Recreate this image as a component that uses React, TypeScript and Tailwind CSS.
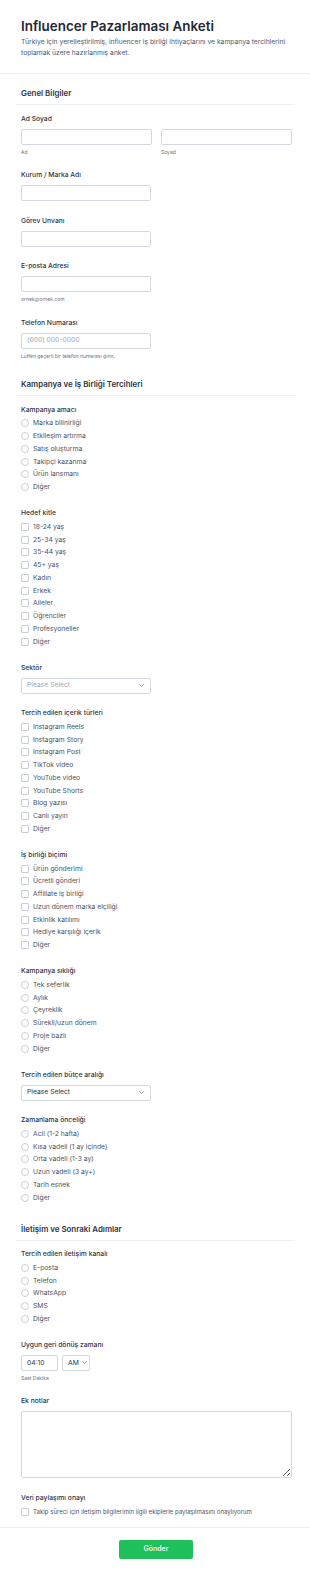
import React from "react";

function Label({ children }: { children: React.ReactNode }) {
  return (
    <div className="h-[9px] leading-[9px] text-[6.75px] font-medium text-[#2c3345] whitespace-nowrap">
      {children}
    </div>
  );
}

function Sub({ children }: { children: React.ReactNode }) {
  return (
    <div className="mt-[4px] h-[7px] leading-[7px] text-[5px] text-[#6b7280] whitespace-nowrap">
      {children}
    </div>
  );
}

function TextInput({ className = "", placeholder }: { className?: string; placeholder?: string }) {
  return (
    <div
      className={
        "h-[16px] rounded-[2px] border border-[#d3d8e1] bg-white flex items-center px-[5px] text-[6.75px] text-[#a0a7b4] " +
        className
      }
    >
      {placeholder}
    </div>
  );
}

function Chevron() {
  return (
    <svg width="5" height="3" viewBox="0 0 10 6" fill="none" className="shrink-0">
      <path d="M1 1l4 4 4-4" stroke="#6b7280" strokeWidth="1.4" strokeLinecap="round" strokeLinejoin="round" />
    </svg>
  );
}

function Select({ text, dark }: { text: string; dark?: boolean }) {
  return (
    <div className="h-[16px] w-[130px] rounded-[2px] border border-[#d3d8e1] bg-white flex items-center justify-between pl-[5px] pr-[6px]">
      <span className={"text-[6.75px] " + (dark ? "text-[#2c3345]" : "text-[#a0a7b4]")}>{text}</span>
      <Chevron />
    </div>
  );
}

function Options({ items, type, small }: { items: string[]; type: "radio" | "check"; small?: boolean }) {
  return (
    <div className="mt-[3.5px] flex flex-col">
      {items.map((t) => (
        <div key={t} className="h-[12.75px] flex items-center gap-[4px]">
          <span
            className={
              "w-[8px] h-[8px] shrink-0 border border-[#c9cfda] bg-white " +
              (type === "radio" ? "rounded-full" : "rounded-[1px]")
            }
          />
          <span
            className={
              "leading-[8px] text-[#4b5563] whitespace-nowrap " + (small ? "text-[6.1px]" : "text-[6.75px]")
            }
          >
            {t}
          </span>
        </div>
      ))}
    </div>
  );
}

function SectionHeader({ children }: { children: React.ReactNode }) {
  return (
    <div className="mx-[15px] px-[6px] pb-[6px] border-b border-[#eef0f3]">
      <div className="h-[10px] leading-[10px] text-[7.9px] font-semibold text-[#2c3345] whitespace-nowrap">
        {children}
      </div>
    </div>
  );
}

function Fields({ children }: { children: React.ReactNode }) {
  return <div className="ml-[21px] mr-[18px] mt-[8.5px] flex flex-col gap-[14.5px]">{children}</div>;
}

export default function App() {
  return (
    <div className="w-[310px] bg-white font-['Inter',sans-serif]">
      {/* Header */}
      <div className="px-[21px] pt-[17px] pb-[15px] border-b border-[#eceef2]">
        <h1 className="h-[18px] leading-[18px] text-[13.4px] font-semibold text-[#1f2937] whitespace-nowrap">
          Influencer Pazarlaması Anketi
        </h1>
        <p className="mt-[1px] leading-[11px] text-[6.75px] text-[#4a5a73] whitespace-nowrap">
          Türkiye için yerelleştirilmiş, influencer iş birliği ihtiyaçlarını ve kampanya tercihlerini
          <br />
          toplamak üzere hazırlanmış anket.
        </p>
      </div>

      {/* Section 1 */}
      <div className="pt-[14px] pb-[5.5px]">
        <SectionHeader>Genel Bilgiler</SectionHeader>
        <Fields>
          <div>
            <Label>Ad Soyad</Label>
            <div className="mt-[6px] grid grid-cols-2 gap-[9px]">
              <div>
                <TextInput />
                <Sub>Ad</Sub>
              </div>
              <div>
                <TextInput />
                <Sub>Soyad</Sub>
              </div>
            </div>
          </div>
          <div>
            <Label>Kurum / Marka Adı</Label>
            <TextInput className="mt-[6px] w-[130px]" />
          </div>
          <div>
            <Label>Görev Unvanı</Label>
            <TextInput className="mt-[6px] w-[130px]" />
          </div>
          <div>
            <Label>E-posta Adresi</Label>
            <TextInput className="mt-[6px] w-[130px]" />
            <Sub>ornek@ornek.com</Sub>
          </div>
          <div>
            <Label>Telefon Numarası</Label>
            <TextInput className="mt-[6px] w-[130px]" placeholder="(000) 000-0000" />
            <Sub>Lütfen geçerli bir telefon numarası girin.</Sub>
          </div>
        </Fields>
      </div>

      {/* Section 2 */}
      <div className="pt-[14px] pb-[5.5px]">
        <SectionHeader>Kampanya ve İş Birliği Tercihleri</SectionHeader>
        <Fields>
          <div>
            <Label>Kampanya amacı</Label>
            <Options
              type="radio"
              items={["Marka bilinirliği", "Etkileşim artırma", "Satış oluşturma", "Takipçi kazanma", "Ürün lansmanı", "Diğer"]}
            />
          </div>
          <div>
            <Label>Hedef kitle</Label>
            <Options
              type="check"
              items={["18-24 yaş", "25-34 yaş", "35-44 yaş", "45+ yaş", "Kadın", "Erkek", "Aileler", "Öğrenciler", "Profesyoneller", "Diğer"]}
            />
          </div>
          <div>
            <Label>Sektör</Label>
            <div className="mt-[6px]">
              <Select text="Please Select" />
            </div>
          </div>
          <div>
            <Label>Tercih edilen içerik türleri</Label>
            <Options
              type="check"
              items={[
                "Instagram Reels",
                "Instagram Story",
                "Instagram Post",
                "TikTok video",
                "YouTube video",
                "YouTube Shorts",
                "Blog yazısı",
                "Canlı yayın",
                "Diğer",
              ]}
            />
          </div>
          <div>
            <Label>İş birliği biçimi</Label>
            <Options
              type="check"
              items={[
                "Ürün gönderimi",
                "Ücretli gönderi",
                "Affiliate iş birliği",
                "Uzun dönem marka elçiliği",
                "Etkinlik katılımı",
                "Hediye karşılığı içerik",
                "Diğer",
              ]}
            />
          </div>
          <div>
            <Label>Kampanya sıklığı</Label>
            <Options
              type="radio"
              items={["Tek seferlik", "Aylık", "Çeyreklik", "Sürekli/uzun dönem", "Proje bazlı", "Diğer"]}
            />
          </div>
          <div>
            <Label>Tercih edilen bütçe aralığı</Label>
            <div className="mt-[6px]">
              <Select text="Please Select" dark />
            </div>
          </div>
          <div>
            <Label>Zamanlama önceliği</Label>
            <Options
              type="radio"
              items={[
                "Acil (1-2 hafta)",
                "Kısa vadeli (1 ay içinde)",
                "Orta vadeli (1-3 ay)",
                "Uzun vadeli (3 ay+)",
                "Tarih esnek",
                "Diğer",
              ]}
            />
          </div>
        </Fields>
      </div>

      {/* Section 3 */}
      <div className="pt-[14px] pb-[5.5px]">
        <SectionHeader>İletişim ve Sonraki Adımlar</SectionHeader>
        <Fields>
          <div>
            <Label>Tercih edilen iletişim kanalı</Label>
            <Options type="radio" items={["E-posta", "Telefon", "WhatsApp", "SMS", "Diğer"]} />
          </div>
          <div>
            <Label>Uygun geri dönüş zamanı</Label>
            <div className="mt-[6px] flex gap-[4px]">
              <div className="h-[16px] w-[37px] rounded-[2px] border border-[#d3d8e1] flex items-center px-[5px] text-[6.75px] text-[#2c3345]">
                04:10
              </div>
              <div className="h-[16px] w-[28px] rounded-[2px] border border-[#d3d8e1] flex items-center gap-[3px] pl-[5px] text-[6.75px] text-[#2c3345]">
                AM
                <Chevron />
              </div>
            </div>
            <Sub>Saat Dakika</Sub>
          </div>
          <div>
            <Label>Ek notlar</Label>
            <textarea className="mt-[6px] block h-[67px] w-full rounded-[2px] border border-[#d3d8e1] bg-white outline-none" />
          </div>
          <div>
            <Label>Veri paylaşımı onayı</Label>
            <Options
              type="check"
              small
              items={["Takip süreci için iletişim bilgilerimin ilgili ekiplerle paylaşılmasını onaylıyorum"]}
            />
          </div>
        </Fields>
      </div>

      {/* Footer */}
      <div className="mt-[3.5px] border-t border-[#eceef2] pt-[12px] pb-[17px] flex justify-center">
        <button className="ml-[2px] h-[19px] w-[74px] rounded-[2px] bg-[#1fbf5c] text-white text-[7px] font-medium">
          Gönder
        </button>
      </div>
    </div>
  );
}
